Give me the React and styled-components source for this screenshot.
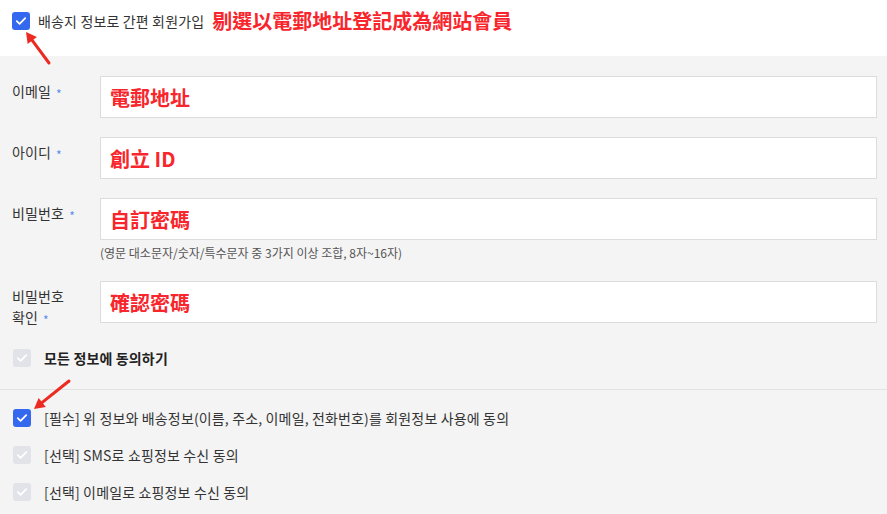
import React from "react";
import styled, { createGlobalStyle, css } from "styled-components";

const GlobalStyle = createGlobalStyle`
  html, body { margin: 0; padding: 0; background: #ffffff; }
  body {
    font-family: "Noto Sans CJK KR", "Noto Sans", sans-serif;
    color: #333;
    -webkit-font-smoothing: antialiased;
  }
  * { box-sizing: border-box; }
`;

const Page = styled.div`
  position: relative;
  width: 887px;
  height: 514px;
  overflow: hidden;
  background: #f4f4f4;
`;

const TopBar = styled.div`
  height: 56px;
  background: #fff;
  display: flex;
  align-items: flex-start;
  padding: 12px 12px 0 12px;
  gap: 8px;
`;

const Box = styled.span`
  flex: none;
  width: 18px;
  height: 18px;
  border-radius: 3px;
  display: inline-flex;
  align-items: center;
  justify-content: center;
  background: ${(p) => (p.$checked ? "#3468ee" : "#e1e3e8")};
`;

const Check = ({ checked }) => (
  <Box $checked={checked}>
    <svg width="12" height="10" viewBox="0 0 12 10" fill="none">
      <path
        d="M1.8 5.2 L4.6 7.8 L10.2 2.2"
        stroke="#fff"
        strokeWidth="1.8"
        strokeLinecap="round"
        strokeLinejoin="round"
      />
    </svg>
  </Box>
);

const TopLabel = styled.span`
  font-size: 14px;
  letter-spacing: 0.15px;
  line-height: 18px;
  color: #333;
`;

const RedNote = styled.span`
  font-family: "Noto Sans CJK TC", "Noto Sans CJK KR", sans-serif;
  font-weight: 700;
  font-size: 20px;
  line-height: 18px;
  color: #f8262c;
`;

const FormSection = styled.div`
  padding: 20px 10px 0 12px;
  display: flex;
  flex-direction: column;
`;

const Field = styled.div`
  display: grid;
  grid-template-columns: 88px 1fr;
  grid-template-rows: ${(p) => (p.$auto ? "auto" : "42px")};
  margin-bottom: 19px;
`;

const Label = styled.div`
  padding-top: 5px;
  padding-right: 18px;
  font-size: 14px;
  letter-spacing: 0.15px;
  line-height: 21px;
  word-break: keep-all;
  color: #333;
`;

const Word = styled.span``;

const Star = styled.span`
  color: #5b8cf0;
  font-size: 12px;
  line-height: 12px;
  margin-left: 5px;
  vertical-align: -2px;
`;

const InputCol = styled.div`
  display: flex;
  flex-direction: column;
`;

const InputBox = styled.div`
  height: 42px;
  flex: none;
  background: #fff;
  border: 1px solid #dcdcdc;
  display: flex;
  align-items: center;
  padding-left: 9px;
  font-family: "Noto Sans CJK TC", "Noto Sans CJK KR", sans-serif;
  font-weight: 700;
  font-size: 20px;
  color: #f8262c;
`;

const Hint = styled.div`
  margin-top: 4px;
  font-size: 12px;
  line-height: 18px;
  color: #555;
`;

const AgreeAll = styled.div`
  display: flex;
  align-items: center;
  gap: 13px;
  padding: 7px 13px 22px;
`;

const AgreeText = styled.span`
  font-size: 14px;
  letter-spacing: 0.15px;
  line-height: 18px;
  color: ${(p) => (p.$bold ? "#222" : "#333")};
  ${(p) =>
    p.$bold &&
    css`
      font-weight: 700;
    `}
`;

const Divider = styled.hr`
  margin: 0;
  border: none;
  border-top: 1px solid #e2e2e2;
`;

const AgreeList = styled.div`
  display: flex;
  flex-direction: column;
  gap: 19px;
  padding: 19px 13px 0;
`;

const AgreeRow = styled.label`
  display: flex;
  align-items: center;
  gap: 13px;
  height: 18px;
`;

const ArrowLayer = styled.svg`
  position: absolute;
  left: 0;
  top: 0;
  pointer-events: none;
`;

const Arrow = ({ x1, y1, x2, y2 }) => {
  const ang = Math.atan2(y2 - y1, x2 - x1);
  const len = 12;
  const spread = 0.5;
  const ax = x2 - len * Math.cos(ang - spread);
  const ay = y2 - len * Math.sin(ang - spread);
  const bx = x2 - len * Math.cos(ang + spread);
  const by = y2 - len * Math.sin(ang + spread);
  const sx = x2 - 7 * Math.cos(ang);
  const sy = y2 - 7 * Math.sin(ang);
  return (
    <g>
      <line x1={x1} y1={y1} x2={sx} y2={sy} stroke="#ec2a21" strokeWidth="3" strokeLinecap="round" />
      <polygon points={`${x2},${y2} ${ax},${ay} ${bx},${by}`} fill="#ec2a21" />
    </g>
  );
};

const fields = [
  { label: "이메일", value: "電郵地址" },
  { label: "아이디", value: "創立 ID" },
  { label: "비밀번호", value: "自訂密碼", hint: "(영문 대소문자/숫자/특수문자 중 3가지 이상 조합, 8자~16자)" },
  { label: "비밀번호 확인", value: "確認密碼" },
];

const agreements = [
  { text: "[필수] 위 정보와 배송정보(이름, 주소, 이메일, 전화번호)를 회원정보 사용에 동의", checked: true },
  { text: "[선택] SMS로 쇼핑정보 수신 동의", checked: false },
  { text: "[선택] 이메일로 쇼핑정보 수신 동의", checked: false },
];

export default function App() {
  return (
    <>
      <GlobalStyle />
      <Page>
        <TopBar>
          <Check checked />
          <TopLabel>배송지 정보로 간편 회원가입</TopLabel>
          <RedNote>剔選以電郵地址登記成為網站會員</RedNote>
        </TopBar>
        <FormSection>
          {fields.map((f) => (
            <Field key={f.label} $auto={!!f.hint}>
              <Label>
                {f.label.split(" ").map((w, i) => (
                  <React.Fragment key={w}>
                    {i > 0 && " "}
                    <Word>{w}</Word>
                  </React.Fragment>
                ))}
                <Star>*</Star>
              </Label>
              <InputCol>
                <InputBox>{f.value}</InputBox>
                {f.hint && <Hint>{f.hint}</Hint>}
              </InputCol>
            </Field>
          ))}
        </FormSection>
        <AgreeAll>
          <Check />
          <AgreeText $bold>모든 정보에 동의하기</AgreeText>
        </AgreeAll>
        <Divider />
        <AgreeList>
          {agreements.map((a) => (
            <AgreeRow key={a.text}>
              <Check checked={a.checked} />
              <AgreeText>{a.text}</AgreeText>
            </AgreeRow>
          ))}
        </AgreeList>
        <ArrowLayer width="887" height="514">
          <Arrow x1={49} y1={63} x2={26} y2={32} />
          <Arrow x1={69} y1={381} x2={34} y2={409} />
        </ArrowLayer>
      </Page>
    </>
  );
}
